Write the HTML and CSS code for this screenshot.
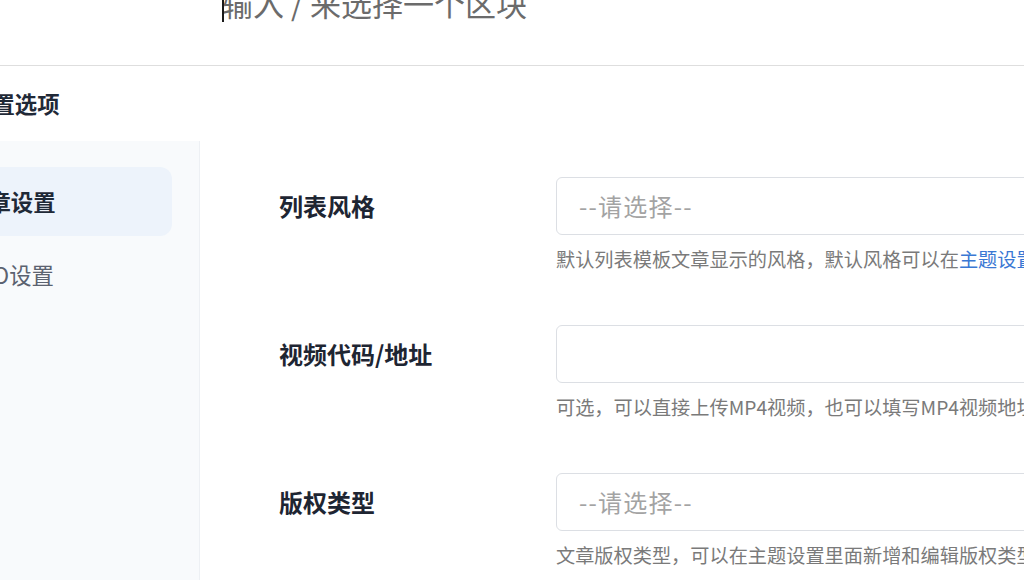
FILE: index.html
```html
<!DOCTYPE html>
<html lang="zh-CN">
<head>
<meta charset="utf-8">
<title>文章设置选项</title>
<link rel="stylesheet" href="styles.css">
</head>
<body>
<div class="editor">
  <p class="placeholder">输入 / 来选择一个区块</p>
</div>
<section class="panel">
  <h2 class="panel-title">设置选项</h2>
  <div class="panel-body">
    <nav class="tabs">
      <a class="tab active">文章设置</a>
      <a class="tab">SEO设置</a>
    </nav>
    <div class="fields">
      <div class="field">
        <label class="field-label">列表风格</label>
        <div class="control">
          <div class="select">--请选择--</div>
          <p class="desc">默认列表模板文章显示的风格，默认风格可以在<a class="link">主题设置</a>中修改</p>
        </div>
      </div>
      <div class="field">
        <label class="field-label">视频代码/地址</label>
        <div class="control">
          <div class="select"></div>
          <p class="desc">可选，可以直接上传MP4视频，也可以填写MP4视频地址</p>
        </div>
      </div>
      <div class="field">
        <label class="field-label">版权类型</label>
        <div class="control">
          <div class="select">--请选择--</div>
          <p class="desc">文章版权类型，可以在主题设置里面新增和编辑版权类型</p>
        </div>
      </div>
    </div>
  </div>
</section>
</body>
</html>
```
FILE: styles.css
```css
html, body {
  margin: 0;
  padding: 0;
  width: 1024px;
  height: 580px;
  overflow: hidden;
  background: #ffffff;
  font-family: "Noto Sans CJK SC", "Noto Sans", sans-serif;
}

.editor {
  height: 65px;
  border-bottom: 1px solid #dedede;
  overflow: hidden;
}

.placeholder {
  position: relative;
  margin: -17px 0 0 222px;
  font-size: 31px;
  line-height: 40px;
  color: #6b6b6b;
  white-space: nowrap;
}

.placeholder::before {
  content: "";
  position: absolute;
  left: 0;
  top: 15px;
  width: 2px;
  height: 24px;
  background: #1a1a1a;
}

.panel {
  margin-left: -60px;
  width: 1300px;
}

.panel-title {
  margin: 0;
  height: 75px;
  line-height: 74px;
  padding-left: 30px;
  font-size: 22.4px;
  font-weight: 700;
  color: #1f2937;
}

.panel-body {
  display: flex;
  height: 460px;
}

.tabs {
  flex: none;
  width: 260px;
  box-sizing: border-box;
  padding: 26px 27px 0 12px;
  background: #f8fafc;
  border-right: 1px solid #edf0f4;
  display: flex;
  flex-direction: column;
  gap: 4px;
}

.tab {
  height: 69px;
  line-height: 69px;
  padding-left: 14px;
  border-radius: 12px;
  font-size: 22.4px;
  color: #5b6270;
}

.tab.active {
  background: #edf3fb;
  font-weight: 700;
  color: #1f2937;
}

.fields {
  padding: 36px 0 0 79px;
  display: flex;
  flex-direction: column;
}

.field {
  display: flex;
  margin-bottom: 53px;
}

.field-label {
  flex: none;
  width: 277px;
  font-size: 24px;
  font-weight: 700;
  line-height: 58px;
  color: #1e2532;
}

.control {
  width: 700px;
}

.select {
  height: 58px;
  box-sizing: border-box;
  border: 1px solid #dcdfe4;
  border-radius: 6px;
  padding: 0 22px;
  line-height: 56px;
  font-size: 24px;
  letter-spacing: 1.2px;
  color: #a3a3a3;
}

.desc {
  margin: 11px 0 0;
  font-size: 19.2px;
  line-height: 26px;
  color: #7a7a7a;
  white-space: nowrap;
}

.link {
  color: #3a78d4;
}
```
